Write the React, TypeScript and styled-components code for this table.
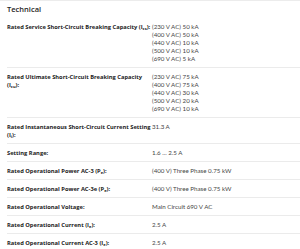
import React from "react";
import styled, { createGlobalStyle } from "styled-components";

const Global = createGlobalStyle`
  html, body { margin: 0; padding: 0; background: #fff; }
  body { font-family: "Open Sans", "Liberation Sans", sans-serif; color: #1f1f1f; }
`;

const Page = styled.div`
  width: 300px;
  height: 249px;
  overflow: hidden;
  border-top: 1px solid #ececec;
  box-sizing: border-box;
`;

const Title = styled.h2`
  margin: 0;
  padding: 3px 0 0 7px;
  font-size: 7.5px;
  line-height: 10px;
  font-weight: 600;
  color: #262626;
`;

const Table = styled.div`
  margin: 4px 0 0 7px;
`;

const Row = styled.div`
  display: grid;
  grid-template-columns: 145px 1fr;
  border-bottom: 1px solid #ebebeb;
  padding: 5px 0 4px;
`;

const Label = styled.div`
  font-size: 5.75px;
  line-height: 8px;
  font-weight: 700;
  color: #222;
  margin-right: -3px;
`;

const Values = styled.div`
  display: flex;
  flex-direction: column;
  font-size: 6.2px;
  line-height: 8px;
  font-weight: 400;
  color: #444;
  font-family: "Lato", "Open Sans", sans-serif;
`;

const Sub = styled.sub`
  font-size: 4px;
  vertical-align: -1px;
  line-height: 0;
`;

type Item = { label: React.ReactNode; values: string[] };

const items: Item[] = [
  {
    label: <>Rated Service Short-Circuit Breaking Capacity (I<Sub>cs</Sub>):</>,
    values: ["(230 V AC) 50 kA", "(400 V AC) 50 kA", "(440 V AC) 10 kA", "(500 V AC) 10 kA", "(690 V AC) 5 kA"],
  },
  {
    label: <>Rated Ultimate Short-Circuit Breaking Capacity (I<Sub>cu</Sub>):</>,
    values: ["(230 V AC) 75 kA", "(400 V AC) 75 kA", "(440 V AC) 30 kA", "(500 V AC) 20 kA", "(690 V AC) 10 kA"],
  },
  {
    label: <>Rated Instantaneous Short-Circuit Current Setting (I<Sub>i</Sub>):</>,
    values: ["31.3 A"],
  },
  { label: <>Setting Range:</>, values: ["1.6 ... 2.5 A"] },
  { label: <>Rated Operational Power AC-3 (P<Sub>e</Sub>):</>, values: ["(400 V) Three Phase 0.75 kW"] },
  { label: <>Rated Operational Power AC-3e (P<Sub>e</Sub>):</>, values: ["(400 V) Three Phase 0.75 kW"] },
  { label: <>Rated Operational Voltage:</>, values: ["Main Circuit 690 V AC"] },
  { label: <>Rated Operational Current (I<Sub>e</Sub>):</>, values: ["2.5 A"] },
  { label: <>Rated Operational Current AC-3 (I<Sub>e</Sub>):</>, values: ["2.5 A"] },
];

export default function App() {
  return (
    <>
      <Global />
      <Page>
        <Title>Technical</Title>
        <Table>
          {items.map((it, i) => (
            <Row key={i}>
              <Label>{it.label}</Label>
              <Values>
                {it.values.map((v, j) => (
                  <span key={j}>{v}</span>
                ))}
              </Values>
            </Row>
          ))}
        </Table>
      </Page>
    </>
  );
}
